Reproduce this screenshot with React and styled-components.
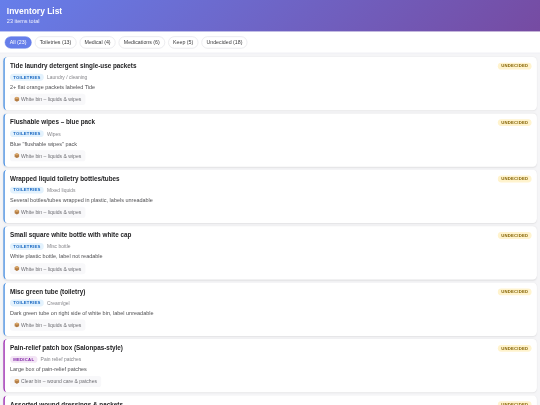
import React from "react";
import styled, { createGlobalStyle } from "styled-components";

const Global = createGlobalStyle`
  html, body { margin: 0; padding: 0; background: #f5f5f7; overflow: hidden; }
  body { font-family: "Liberation Sans", Arial, sans-serif; color: #1d1d1f; }
  * { box-sizing: border-box; }
`;

/* The reference is a 1024×768 page reduced to 540×405. */
const Viewport = styled.div`
  width: 540px;
  height: 405px;
  overflow: hidden;
`;

const Page = styled.div`
  width: 1024px;
  height: 768px;
  overflow: hidden;
  transform: scale(0.52734);
  transform-origin: 0 0;
  filter: blur(0.8px);
`;

const Header = styled.header`
  height: 60px;
  padding: 12px 13px 0;
  background: linear-gradient(135deg, #667eea 0%, #764ba2 100%);
  color: #fff;
`;

const Title = styled.h1`
  margin: 0;
  font-size: 16px;
  line-height: 19px;
  font-weight: 700;
`;

const Subtitle = styled.div`
  margin-top: 3px;
  font-size: 10.4px;
  line-height: 12px;
  opacity: 0.9;
`;

const FilterBar = styled.nav`
  height: 41px;
  display: flex;
  align-items: center;
  gap: 6px;
  padding: 0 9px;
  background: #fff;
  border-bottom: 1px solid #e5e5ea;
`;

const Chip = styled.button`
  height: 23px;
  padding: 0 8.5px;
  border-radius: 12px;
  border: 1px solid ${(p) => (p.$active ? "#667eea" : "#dcdce2")};
  background: ${(p) => (p.$active ? "#667eea" : "#fff")};
  color: ${(p) => (p.$active ? "#fff" : "#3a3a3c")};
  font-family: inherit;
  font-size: 10px;
  white-space: nowrap;
`;

const List = styled.main`
  display: flex;
  flex-direction: column;
  gap: 6px;
  padding: 7px 6px 0;
`;

const Card = styled.article`
  height: 101px;
  flex-shrink: 0;
  padding: 10px 10px 0;
  background: #fff;
  border-left: 3px solid ${(p) => p.$accent};
  border-radius: 8px;
  box-shadow: 0 1px 3px rgba(0, 0, 0, 0.08);
`;

const TopRow = styled.div`
  display: flex;
  justify-content: space-between;
  align-items: center;
`;

const ItemName = styled.h2`
  margin: 0;
  font-size: 12px;
  line-height: 14px;
  font-weight: 700;
  color: #1d1d1f;
`;

const Status = styled.span`
  padding: 0 6px;
  height: 13px;
  line-height: 13px;
  border-radius: 7px;
  background: #fff3cd;
  color: #856404;
  font-size: 8px;
  font-weight: 700;
  letter-spacing: 0.45px;
`;

const MetaRow = styled.div`
  margin-top: 7.5px;
  display: flex;
  align-items: center;
  gap: 6px;
`;

const Category = styled.span`
  padding: 0 6px;
  height: 13px;
  line-height: 13px;
  border-radius: 7px;
  background: ${(p) => p.$bg};
  color: ${(p) => p.$fg};
  font-size: 8px;
  font-weight: 700;
  letter-spacing: 0.5px;
`;

const Kind = styled.span`
  font-size: 9.4px;
  color: #86868b;
`;

const Description = styled.p`
  margin: 7px 0 0;
  font-size: 10.4px;
  line-height: 12px;
  color: #515154;
`;

const Location = styled.div`
  margin-top: 6px;
  display: flex;
  width: fit-content;
  align-items: center;
  gap: 3.5px;
  height: 21px;
  padding: 0 7.5px;
  border-radius: 5px;
  background: #f8f8fa;
  color: #6e6e73;
  font-size: 9.6px;
`;

const BoxIcon = () => (
  <svg width="10" height="10" viewBox="0 0 10 10" aria-hidden="true">
    <path d="M5 .5 9.5 2.7v4.8L5 9.8.5 7.5V2.7z" fill="#b9824a" />
    <path d="M5 .5 9.5 2.7 5 5 .5 2.7z" fill="#d9a86c" />
    <path d="M5 5v4.8" stroke="#8c5e30" strokeWidth=".6" />
  </svg>
);

const filters = [
  ["All (23)", true],
  ["Toiletries (13)"],
  ["Medical (4)"],
  ["Medications (6)"],
  ["Keep (5)"],
  ["Undecided (18)"],
];

const TOILET = { label: "TOILETRIES", bg: "#e3f2fd", fg: "#1565c0", accent: "#4a90e2" };
const MED = { label: "MEDICAL", bg: "#f3e5f5", fg: "#7b1fa2", accent: "#9c27b0" };

const items = [
  { name: "Tide laundry detergent single-use packets", cat: TOILET, kind: "Laundry / cleaning", desc: "2+ flat orange packets labeled Tide", loc: "White bin – liquids & wipes" },
  { name: "Flushable wipes – blue pack", cat: TOILET, kind: "Wipes", desc: 'Blue "flushable wipes" pack', loc: "White bin – liquids & wipes" },
  { name: "Wrapped liquid toiletry bottles/tubes", cat: TOILET, kind: "Mixed liquids", desc: "Several bottles/tubes wrapped in plastic, labels unreadable", loc: "White bin – liquids & wipes" },
  { name: "Small square white bottle with white cap", cat: TOILET, kind: "Misc bottle", desc: "White plastic bottle, label not readable", loc: "White bin – liquids & wipes" },
  { name: "Misc green tube (toiletry)", cat: TOILET, kind: "Cream/gel", desc: "Dark green tube on right side of white bin, label unreadable", loc: "White bin – liquids & wipes" },
  { name: "Pain-relief patch box (Salonpas-style)", cat: MED, kind: "Pain relief patches", desc: "Large box of pain-relief patches", loc: "Clear bin – wound care & patches" },
  { name: "Assorted wound dressings & packets", cat: MED, kind: "Wound care", desc: "Assorted dressings and packets", loc: "Clear bin – wound care & patches" },
];

export default function App() {
  return (
    <Viewport>
      <Global />
      <Page>
        <Header>
          <Title>Inventory List</Title>
          <Subtitle>23 items total</Subtitle>
        </Header>
        <FilterBar>
          {filters.map(([label, active]) => (
            <Chip key={label} $active={active}>{label}</Chip>
          ))}
        </FilterBar>
        <List>
          {items.map((it) => (
            <Card key={it.name} $accent={it.cat.accent}>
              <TopRow>
                <ItemName>{it.name}</ItemName>
                <Status>UNDECIDED</Status>
              </TopRow>
              <MetaRow>
                <Category $bg={it.cat.bg} $fg={it.cat.fg}>{it.cat.label}</Category>
                <Kind>{it.kind}</Kind>
              </MetaRow>
              <Description>{it.desc}</Description>
              <Location><BoxIcon />{it.loc}</Location>
            </Card>
          ))}
        </List>
      </Page>
    </Viewport>
  );
}
